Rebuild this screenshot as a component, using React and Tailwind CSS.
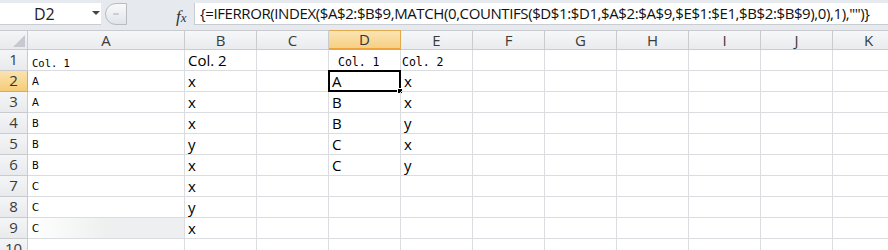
import React from 'react';

const COLS = ['A', 'B', 'C', 'D', 'E', 'F', 'G', 'H', 'I', 'J', 'K'];

const FORMULA = '{=IFERROR(INDEX($A$2:$B$9,MATCH(0,COUNTIFS($D$1:$D1,$A$2:$A$9,$E$1:$E1,$B$2:$B$9),0),1),"")}';

// cell content per row: A, B, D, E
const ROWS = [
    { a: 'Col. 1', aMono: true, b: 'Col. 2', d: 'Col. 1', e: 'Col. 2', dMono: true },
    { a: 'A', b: 'x', d: 'A', e: 'x' },
    { a: 'A', b: 'x', d: 'B', e: 'x' },
    { a: 'B', b: 'x', d: 'B', e: 'y' },
    { a: 'B', b: 'y', d: 'C', e: 'x' },
    { a: 'B', b: 'x', d: 'C', e: 'y' },
    { a: 'C', b: 'x' },
    { a: 'C', b: 'y' },
    { a: 'C', b: 'x', shade: true },
    {},
];

function Cell({ children, className = '' }) {
    return (
        <div className={`relative flex items-end h-full border-r border-b border-[#dadcdf] overflow-visible whitespace-nowrap text-black ${className}`}>
            {children}
        </div>
    );
}

function RowHeader({ n, active }) {
    return (
        <div className={`flex items-end justify-center h-full pb-[1px] border-r border-b text-[15px] leading-none font-['Open_Sans'] ${
            active
                ? 'bg-gradient-to-b from-[#fbe2ae] to-[#f5cd78] border-[#e1a94d] text-[#333]'
                : 'bg-gradient-to-b from-[#f4f5f7] to-[#e8eaed] border-[#c9cbce] text-[#3b3b3b]'
        }`}>
            <span className="mb-[2px]">{n}</span>
        </div>
    );
}

export default function App() {
    return (
        <div className="w-[888px] h-[250px] overflow-hidden bg-white font-['Open_Sans']">
            {/* formula bar */}
            <div className="h-[30px] bg-[#e6e9ed] flex pt-[3px] pb-[5px]">
                <div className="w-[101px] bg-white flex items-center border-b border-[#c9ccd1] relative">
                    <span className="text-[16px] ml-[34px] text-[#222]">D2</span>
                    <span className="absolute left-[92px] top-[8px] w-0 h-0 border-l-[4px] border-r-[4px] border-t-[4px] border-l-transparent border-r-transparent border-t-[#444]" />
                </div>
                <div className="w-[94px] flex items-center relative">
                    <div className="ml-[4px] w-[22px] h-[22px] rounded-l-full bg-gradient-to-b from-[#f8f9fa] to-[#e1e5ea] border border-[#b7bcc3] flex items-center justify-center">
                        <div className="w-[6px] h-[2px] bg-[#c9ccd1] rounded-full" />
                    </div>
                    <span className="absolute left-[75px] top-[1px] font-['Liberation_Serif'] italic text-[17px] text-[#333]">f<span className="text-[13px]">x</span></span>
                    <div className="absolute right-0 top-0 h-full w-[1px] bg-[#c9ccd1]" />
                </div>
                <div className="flex-1 bg-white flex items-center border-b border-[#c9ccd1] pl-[5px] overflow-hidden">
                    <span className="text-[15px] tracking-[-0.4px] text-[#111] whitespace-nowrap">{FORMULA}</span>
                </div>
            </div>

            {/* sheet */}
            <div className="grid grid-cols-[28px_157px_repeat(10,72px)] grid-rows-[20px_repeat(9,21px)_21px]">
                {/* corner */}
                <div className="relative h-full bg-gradient-to-b from-[#f4f5f7] to-[#e8eaed] border-r border-b border-t border-[#c9cbce]">
                    <svg className="absolute right-[2px] bottom-[2px]" width="12" height="12" viewBox="0 0 12 12">
                        <polygon points="12,0 12,12 0,12" fill="#c6cad0" />
                    </svg>
                </div>
                {COLS.map(c => (
                    <div key={c} className={`flex items-center justify-center h-full border-t text-[15px] leading-none border-r ${
                        c === 'D'
                            ? 'bg-gradient-to-b from-[#fbe4b2] to-[#f6d083] border-t-[#e1a94d] border-r-[#e1a94d] border-b-2 border-b-[#f0a33a] text-[#333]'
                            : 'bg-gradient-to-b from-[#f6f7f9] to-[#e9ebee] border-t-[#c9cbce] border-r-[#c9cbce] border-b border-b-[#c9cbce] text-[#3b3b3b]'
                    }`}>
                        {c}
                    </div>
                ))}

                {ROWS.map((r, i) => (
                    <React.Fragment key={i}>
                        <RowHeader n={i + 1} active={i === 1} />
                        <Cell className={r.shade ? 'bg-gradient-to-r from-white via-[#eef0f0] to-[#edeff0]' : ''}>
                            {r.a && (r.aMono
                                ? <span className="pl-[4px] pb-[2px] font-['DejaVu_Sans_Mono'] text-[10.5px] leading-none">{r.a}</span>
                                : <span className="pl-[4px] pb-[4px] font-['DejaVu_Sans'] text-[10px] leading-none">{r.a}</span>)}
                        </Cell>
                        <Cell>
                            {r.b && <span className="pl-[3px] pb-[2px] text-[15px] leading-none">{r.b}</span>}
                        </Cell>
                        <Cell />
                        <Cell>
                            {r.d && (r.dMono
                                ? <span className="pl-[9px] pb-[2px] font-['DejaVu_Sans_Mono'] text-[11.5px] leading-none">{r.d}</span>
                                : <span className="pl-[3px] pb-[2px] text-[15px] leading-none">{r.d}</span>)}
                            {i === 1 && (
                                <div className="absolute -left-[1px] -top-[1px] -right-[1px] -bottom-[1px] border-2 border-black pointer-events-none">
                                    <div className="absolute -right-[4px] -bottom-[4px] w-[6px] h-[6px] bg-black border border-white" />
                                </div>
                            )}
                        </Cell>
                        <Cell>
                            {r.e && (r.dMono
                                ? <span className="pl-[1px] pb-[2px] font-['DejaVu_Sans_Mono'] text-[11.5px] leading-none">{r.e}</span>
                                : <span className="pl-[3px] pb-[2px] text-[15px] leading-none">{r.e}</span>)}
                        </Cell>
                        <Cell />
                        <Cell />
                        <Cell />
                        <Cell />
                        <Cell />
                        <Cell />
                    </React.Fragment>
                ))}
            </div>
        </div>
    );
}
